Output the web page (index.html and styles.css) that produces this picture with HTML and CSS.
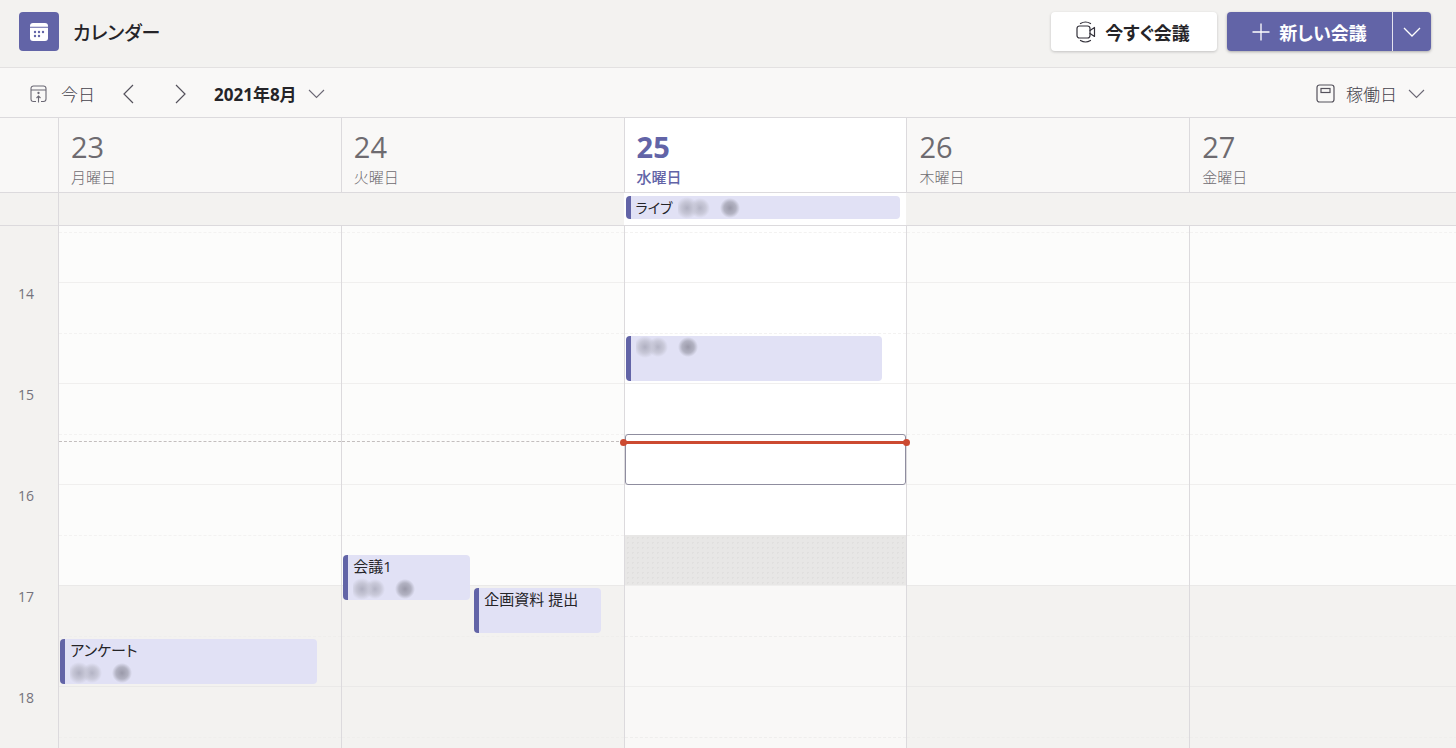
FILE: index.html
```html
<!DOCTYPE html>
<html lang="ja">
<head>
  <meta charset="UTF-8" />
  <meta name="viewport" content="width=device-width, initial-scale=1.0"/>
  <title>カレンダー</title>
  <link rel="stylesheet" href="styles.css">
</head>
<body>

  <header class="app-header">
    <span class="app-logo">
      <svg width="20" height="20" viewBox="0 0 20 20">
        <path d="M4 1h12a3 3 0 0 1 3 3v.7H1V4a3 3 0 0 1 3-3z" fill="#fff"/>
        <path d="M1 5.700h18V16a3 3 0 0 1-3 3H4a3 3 0 0 1-3-3z" fill="#fff"/>
        <g fill="#6264a7">
          <circle cx="6" cy="10" r="1.2"/><circle cx="10" cy="10" r="1.2"/><circle cx="14" cy="10" r="1.2"/>
          <circle cx="6" cy="14" r="1.2"/><circle cx="10" cy="14" r="1.2"/>
        </g>
      </svg>
    </span>
    <h1>カレンダー</h1>
    <button type="button" class="btn btn-meet">
      <svg width="20" height="22" viewBox="0 0 20 22" fill="none" stroke="#33313a" stroke-width="1.2" stroke-linecap="round" stroke-linejoin="round">
        <rect x="1" y="5" width="13" height="12" rx="2.5"/>
        <path d="M14 9.500L18.500 6.500v9L14 12.500"/>
        <path d="M4.500 2.500Q9.500-.5 14.500 2.500M4.500 19.500Q9.500 22.500 14.500 19.500"/>
      </svg>
      今すぐ会議
    </button>
    <div class="btn-group">
      <button type="button" class="btn btn-new">
        <svg width="18" height="18" viewBox="0 0 18 18" fill="none" stroke="#fff" stroke-width="1.3"><path d="M9 .5v17M.5 9h17"/></svg>
        新しい会議
      </button>
      <button type="button" class="btn btn-more" aria-label="その他">
        <svg width="18" height="10" viewBox="0 0 18 10" fill="none" stroke="#fff" stroke-width="1.3"><path d="M1 1l8 8 8-8"/></svg>
      </button>
    </div>
  </header>

  <nav class="toolbar">
    <button type="button" class="tool tool-today">
      <svg width="17" height="18" viewBox="0 0 17 18" fill="none" stroke="#6b6874" stroke-width="1.1">
        <path d="M6 16.500H3.500a2.500 2.500 0 0 1-2.500-2.500V3.500A2.500 2.500 0 0 1 3.500 1h10A2.500 2.500 0 0 1 16 3.500V14a2.500 2.500 0 0 1-2.500 2.500H11M1 5h15M8.500 17.500v-6M6.500 13l2-2 2 2"/>
        <circle cx="8.500" cy="8" r=".6" fill="#6b6874"/>
      </svg>
      今日
    </button>
    <button type="button" class="tool tool-prev" aria-label="前の週">
      <svg width="11" height="20" viewBox="0 0 11 20" fill="none" stroke="#55525c" stroke-width="1.2"><path d="M10 1l-9 9 9 9"/></svg>
    </button>
    <button type="button" class="tool tool-next" aria-label="次の週">
      <svg width="11" height="20" viewBox="0 0 11 20" fill="none" stroke="#55525c" stroke-width="1.2"><path d="M1 1l9 9-9 9"/></svg>
    </button>
    <button type="button" class="tool tool-month">
      2021年8月
      <svg width="17" height="10" viewBox="0 0 17 10" fill="none" stroke="#6b6874" stroke-width="1.1"><path d="M1 1l7.500 7.500L16 1"/></svg>
    </button>
    <button type="button" class="tool tool-view">
      <svg width="19" height="19" viewBox="0 0 19 19" fill="none" stroke="#55525c" stroke-width="1.2">
        <rect x="1" y="1" width="17" height="17" rx="2.500"/><rect x="5" y="4.500" width="9" height="4"/>
      </svg>
      稼働日
      <svg width="17" height="10" viewBox="0 0 17 10" fill="none" stroke="#6b6874" stroke-width="1.1"><path d="M1 1l7.500 7.500L16 1"/></svg>
    </button>
  </nav>

  <main class="calendar">
    <div class="week day-heads">
      <div class="gutter"></div>
      <div class="day-head"><span class="num">23</span><span class="name">月曜日</span></div>
      <div class="day-head"><span class="num">24</span><span class="name">火曜日</span></div>
      <div class="day-head today"><span class="num">25</span><span class="name">水曜日</span></div>
      <div class="day-head"><span class="num">26</span><span class="name">木曜日</span></div>
      <div class="day-head"><span class="num">27</span><span class="name">金曜日</span></div>
    </div>

    <div class="week all-day">
      <div class="gutter"></div>
      <div class="all-day-cell first"></div>
      <div class="all-day-cell"></div>
      <div class="all-day-cell today">
        <div class="all-day-event">ライブ <span class="person"></span></div>
      </div>
      <div class="all-day-cell"></div>
      <div class="all-day-cell"></div>
    </div>

    <div class="week grid">
      <div class="gutter hours">
        <span>14</span><span>15</span><span>16</span><span>17</span><span>18</span>
      </div>

      <div class="day">
        <div class="slot cut"></div>
        <div class="slot half"></div>
        <div class="slot"></div><div class="slot half"></div>
        <div class="slot"></div><div class="slot half"></div>
        <div class="slot"></div><div class="slot half"></div>
        <div class="slot off"></div><div class="slot half off"></div>
        <div class="slot off"></div><div class="slot half off"></div>
        <div class="past-line"></div>
        <div class="event" style="top: 413px; left: 0.5%; width: 91%">
          アンケート <span class="person"></span>
        </div>
      </div>

      <div class="day">
        <div class="slot cut"></div>
        <div class="slot half"></div>
        <div class="slot"></div><div class="slot half"></div>
        <div class="slot"></div><div class="slot half"></div>
        <div class="slot"></div><div class="slot half"></div>
        <div class="slot off"></div><div class="slot half off"></div>
        <div class="slot off"></div><div class="slot half off"></div>
        <div class="past-line"></div>
        <div class="event" style="top: 329px; left: 0.5%; width: 45%">
          会議1 <span class="person"></span>
        </div>
        <div class="event" style="top: 362px; left: 47%; width: 45%">
          企画資料 提出
        </div>
      </div>

      <div class="day today">
        <div class="slot cut"></div>
        <div class="slot half"></div>
        <div class="slot"></div><div class="slot half"></div>
        <div class="slot"></div><div class="slot half"></div>
        <div class="slot"></div><div class="slot half busy"></div>
        <div class="slot off"></div><div class="slot half off"></div>
        <div class="slot off"></div><div class="slot half off"></div>
        <div class="event" style="top: 110px; left: 0.5%; width: 91%">
          <span class="person"></span>
        </div>
        <div class="selection" style="top: 208px"></div>
        <div class="now-line"></div>
      </div>

      <div class="day">
        <div class="slot cut"></div>
        <div class="slot half"></div>
        <div class="slot"></div><div class="slot half"></div>
        <div class="slot"></div><div class="slot half"></div>
        <div class="slot"></div><div class="slot half"></div>
        <div class="slot off"></div><div class="slot half off"></div>
        <div class="slot off"></div><div class="slot half off"></div>
      </div>

      <div class="day">
        <div class="slot cut"></div>
        <div class="slot half"></div>
        <div class="slot"></div><div class="slot half"></div>
        <div class="slot"></div><div class="slot half"></div>
        <div class="slot"></div><div class="slot half"></div>
        <div class="slot off"></div><div class="slot half off"></div>
        <div class="slot off"></div><div class="slot half off"></div>
      </div>
    </div>
  </main>

</body>
</html>
```

FILE: styles.css
```css
* {
  box-sizing: border-box;
}
body {
  font-family: 'Open Sans', 'Noto Sans CJK JP', sans-serif;
  font-feature-settings: "palt";
  margin: 0;
  height: 100vh;
  display: flex;
  flex-direction: column;
  overflow: hidden;
  background-color: #f3f2f0;
  color: #252428;
}

button {
  font: inherit;
  font-feature-settings: inherit;
  color: inherit;
  border: none;
  background: none;
  padding: 0;
  display: flex;
  align-items: center;
  cursor: pointer;
  white-space: nowrap;
}

svg {
  display: block;
  flex: none;
}

/* header */
.app-header {
  display: flex;
  align-items: center;
  height: 68px;
  flex: none;
  padding: 0 25px 4px 19px;
  border-bottom: 1px solid #e3e1e1;
}
.app-logo {
  display: flex;
  align-items: center;
  justify-content: center;
  width: 40px;
  height: 39px;
  border-radius: 4px;
  background-color: #6264a7;
}
h1 {
  margin: 0 auto 0 14px;
  padding-top: 2px;
  font-size: 19px;
  font-weight: 500;
  line-height: 28px;
}

.btn {
  height: 39px;
  justify-content: center;
  font-size: 18px;
  font-weight: 700;
  border-radius: 4px;
}
.btn-meet {
  gap: 9px;
  width: 166px;
  padding-right: 2px;
  margin-right: 10px;
  background-color: #fff;
  box-shadow: 0 1px 3px rgba(0, 0, 0, 0.2);
}
.btn-group {
  display: flex;
  gap: 1px;
  border-radius: 4px;
  background-color: #e4e3ef;
  box-shadow: 0 1px 3px rgba(0, 0, 0, 0.3);
}
.btn-new,
.btn-more {
  color: #fff;
  background-color: #6264a7;
}
.btn-new {
  gap: 9px;
  width: 165px;
  border-radius: 4px 0 0 4px;
}
.btn-more {
  width: 38px;
  border-radius: 0 4px 4px 0;
}

/* toolbar */
.toolbar {
  display: flex;
  align-items: center;
  height: 49px;
  flex: none;
  padding: 2px 31px 0 30px;
  background-color: #f9f8f7;
}
.tool {
  height: 32px;
  font-size: 17px;
}
.tool-today,
.tool-view {
  gap: 14px;
  font-weight: 300;
  color: #45424c;
}
.tool-prev {
  margin-left: 28px;
}
.tool-next {
  margin-left: 41px;
}
.tool-month {
  gap: 11px;
  margin-left: 28px;
  font-weight: 700;
}
.tool-view {
  gap: 11px;
  margin-left: auto;
}

.calendar {
  flex: 1;
  min-height: 0;
  display: flex;
  flex-direction: column;
  overflow: hidden;
}
.week {
  display: grid;
  grid-template-columns: 58px repeat(5, 1fr);
  flex: none;
  margin-right: -16px;
}

.day-heads {
  height: 76px;
  background-color: #f9f8f7;
  border-top: 1px solid #dcdadd;
  border-bottom: 1px solid #dcdadd;
}
.day-head {
  display: flex;
  flex-direction: column;
  padding: 11px 12px 0;
  border-left: 1px solid #dcdadd;
  color: #6e6b70;
}
.day-head .num {
  font-size: 29px;
  font-weight: 500;
  line-height: 36px;
}
.day-head .name {
  font-size: 15px;
  font-weight: 300;
  line-height: 24px;
}
.day-head.today {
  background-color: #fff;
  color: #6264a7;
}
.day-head.today .num {
  font-weight: 700;
}
.day-head.today .name {
  font-weight: 500;
}

.all-day {
  height: 33px;
  border-bottom: 1px solid #dcdadd;
}
.all-day-cell.first {
  border-left: 1px solid #dcdadd;
}
.all-day-cell.today {
  padding: 3px 6px 0 2px;
  background-color: #fff;
}
.all-day-event {
  display: flex;
  align-items: center;
  gap: 6px;
  height: 23px;
  padding-left: 5px;
  border-left: 5px solid #6264a7;
  border-radius: 4px;
  background-color: #e1e1f5;
  font-size: 14px;
  line-height: 22px;
}

/* hours */
.grid {
  flex: 1;
  min-height: 0;
  overflow: hidden;
}
.hours {
  padding-top: 56px;
}
.hours span {
  display: block;
  height: 101px;
  padding-left: 18px;
  font-size: 14px;
  line-height: 24px;
  color: #75727c;
}

.day {
  position: relative;
  border-left: 1px solid #dcdadd;
}
.slot {
  height: 51px;
  border-top: 1px solid #f0efee;
  background-color: #fcfcfb;
}
.slot.half {
  height: 50px;
  border-top: 1px dashed #f3f2f1;
}
.slot.cut {
  height: 6px;
  border-top: none;
}
.slot.off {
  background-color: #f3f2f0;
  border-top-color: #eae9e8;
}
.slot.half.off {
  border-top-color: #efeeec;
}
.today .slot {
  background-color: #fff;
}
.today .slot.off {
  background-color: #f9f8f7;
  border-top-color: #efeeed;
}
.today .slot.busy {
  border-top: none;
  background-color: #e8e7e6;
  background-image: radial-gradient(circle, #e1e0df 1px, transparent 1px);
  background-size: 5px 5px;
}
.day.today {
  z-index: 1;
}
.today + .day,
.today + .day-head {
  border-left: 1px solid #dcdadd;
}

.event {
  position: absolute;
  height: 45px;
  padding-left: 5px;
  border-left: 5px solid #6264a7;
  border-radius: 4px;
  background-color: #e1e1f5;
  font-size: 15px;
  line-height: 23px;
  overflow: hidden;
}

/* hidden attendee name */
.person {
  display: block;
  width: 66px;
  height: 22px;
  background:
    radial-gradient(circle at 9px 11px, #b0b0c1 0, #c6c6d6 6px, transparent 11px),
    radial-gradient(circle at 22px 11px, #b4b4c5 0, #c9c9d9 6px, transparent 10px),
    radial-gradient(circle at 52px 11px, #9a99a9 0, #b2b2c2 6px, transparent 10px);
}

.selection {
  position: absolute;
  left: 0;
  right: 0;
  height: 51px;
  border: 1px solid #8f8d9f;
  border-radius: 3px;
}
.past-line {
  position: absolute;
  top: 215px;
  left: 0;
  right: 0;
  border-top: 1px dashed #c3bebe;
}
.now-line {
  position: absolute;
  top: 215px;
  left: 0;
  right: 0;
  height: 3px;
  background-color: #cc4a31;
}
.now-line::before,
.now-line::after {
  content: "";
  position: absolute;
  top: -2px;
  width: 7px;
  height: 7px;
  border-radius: 50%;
  background-color: #cc4a31;
}
.now-line::before {
  left: -5px;
}
.now-line::after {
  right: -4px;
}
```
